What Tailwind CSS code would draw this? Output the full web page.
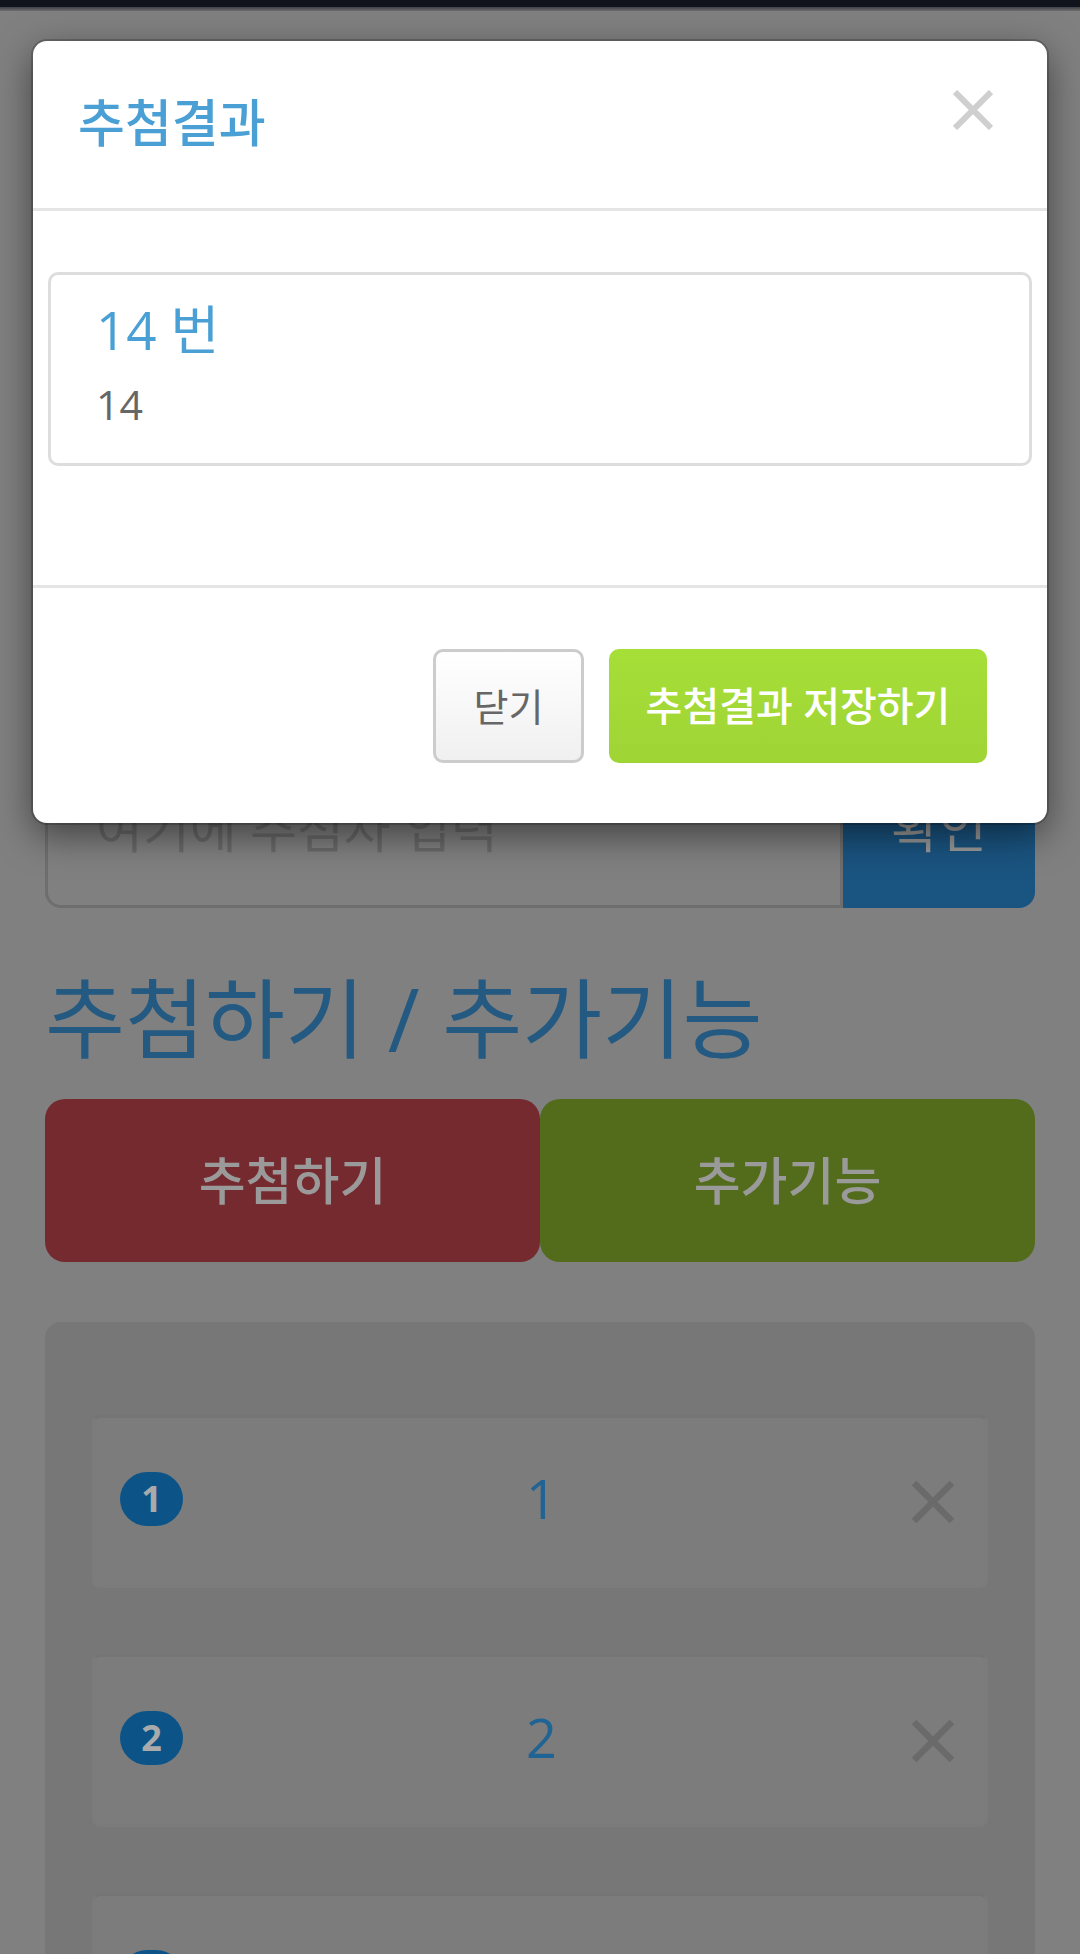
<!DOCTYPE html>
<html lang="ko">
    <head>
        <meta charset="UTF-8">
        <title>추첨결과</title>
        <script src="https://cdn.jsdelivr.net/npm/@tailwindcss/browser@4"></script>
    </head>
    <body class="bg-white font-['Open_Sans','Noto_Sans_CJK_KR',sans-serif]">
        <div class="relative h-[1954px] overflow-hidden bg-[#808080]">
            <!-- top bar -->
            <div class="h-[7px] bg-[#11131c]"></div>
            <div class="h-[4px] bg-linear-to-b from-[#3f3f47] to-[#6e6e6e]"></div>

            <div class="px-[45px] pt-[737px]">
                <!-- input group -->
                <div class="flex h-[160px]">
                    <div class="flex flex-1 items-center rounded-l-[16px] border-[3px] border-[#6e6e6e] pl-[48px] text-[51px] text-[#6a6a6a]">여기에 추첨자 입력</div>
                    <div class="flex w-[192px] items-center justify-center rounded-r-[16px] bg-[#1a5480] text-[52px] text-[#999]">확인</div>
                </div>

                <h1 class="flex h-[191px] items-center pt-[30px] text-[87px] leading-none text-[#245a82]">추첨하기 / 추가기능</h1>

                <!-- action buttons -->
                <div class="flex h-[163px]">
                    <div class="flex flex-1 items-center justify-center rounded-[20px] bg-[#752a2f] text-[51px] font-medium text-[#9a9a9a]">추첨하기</div>
                    <div class="flex flex-1 items-center justify-center rounded-[20px] bg-[#526c1b] text-[51px] font-medium text-[#9a9a9a]">추가기능</div>
                </div>

                <!-- list -->
                <div class="mt-[60px] flex flex-col gap-[66px] rounded-[16px] bg-[#777] px-[47px] pt-[93px] pb-[40px]">
                    <div class="grid h-[173px] grid-cols-[1fr_auto_1fr] items-center rounded-[8px] border-[3px] border-[#7b7b7b] border-t-[#757575] bg-[#7c7c7c] px-[25px]">
                        <span class="mb-[6px] flex h-[54px] w-[63px] items-center justify-center rounded-full bg-[#0c5488] text-[36px] font-bold text-[#aaa]">1</span>
                        <span class="mb-[6px] ml-[3px] text-[54px] text-[#1f6494]">1</span>
                        <svg class="mr-[6px] justify-self-end" width="42" height="42" viewBox="0 0 42 42" stroke="#6a6a6a" stroke-width="6.5"><path d="M2 2 40 40M40 2 2 40" /></svg>
                    </div>
                    <div class="grid h-[173px] grid-cols-[1fr_auto_1fr] items-center rounded-[8px] border-[3px] border-[#7b7b7b] border-t-[#757575] bg-[#7c7c7c] px-[25px]">
                        <span class="mb-[6px] flex h-[54px] w-[63px] items-center justify-center rounded-full bg-[#0c5488] text-[36px] font-bold text-[#aaa]">2</span>
                        <span class="mb-[6px] ml-[3px] text-[54px] text-[#1f6494]">2</span>
                        <svg class="mr-[6px] justify-self-end" width="42" height="42" viewBox="0 0 42 42" stroke="#6a6a6a" stroke-width="6.5"><path d="M2 2 40 40M40 2 2 40" /></svg>
                    </div>
                    <div class="grid h-[173px] grid-cols-[1fr_auto_1fr] items-center rounded-[8px] border-[3px] border-[#7b7b7b] border-t-[#757575] bg-[#7c7c7c] px-[25px]">
                        <span class="mb-[6px] flex h-[54px] w-[63px] items-center justify-center rounded-full bg-[#0c5488] text-[36px] font-bold text-[#aaa]">3</span>
                        <span class="mb-[6px] ml-[3px] text-[54px] text-[#1f6494]">3</span>
                    </div>
                </div>
            </div>

            <!-- result modal -->
            <div class="absolute top-[41px] left-[33px] flex h-[782px] w-[1014px] flex-col rounded-[14px] bg-white shadow-[0_0_0_2px_rgba(0,0,0,0.18),0_12px_37px_rgba(0,0,0,0.5)]">
                <div class="flex h-[170px] justify-between border-b-[3px] border-[#e5e5e5] pr-[54px] pl-[45px]">
                    <h2 class="mt-[51px] text-[51px] font-medium leading-[60px] text-[#4a9fd5]">추첨결과</h2>
                    <svg class="mt-[49px]" width="40" height="40" viewBox="0 0 40 40" stroke="#cfcfcf" stroke-width="6"><path d="M2 2 38 38M38 2 2 38" /></svg>
                </div>
                <div class="flex-1 px-[15px] pt-[61px]">
                    <div class="h-[194px] rounded-[10px] border-[3px] border-[#ddd] pt-[23px] pl-[45px]">
                        <div class="text-[53px] leading-[64px] text-[#4a9fd5]">14 번</div>
                        <div class="mt-[12px] text-[41px] leading-[60px] text-[#666]">14</div>
                    </div>
                </div>
                <div class="flex h-[238px] justify-end gap-[25px] border-t-[3px] border-[#e5e5e5] pt-[61px] pr-[60px]">
                    <button class="flex h-[114px] w-[151px] items-center justify-center rounded-[10px] border-[3px] border-[#ccc] bg-linear-to-b from-white to-[#f0f0f0] text-[38px] text-[#666]">닫기</button>
                    <button class="flex h-[114px] w-[378px] items-center justify-center rounded-[10px] bg-linear-to-b from-[#a6df38] to-[#9fd435] text-[40px] font-medium text-white">추첨결과 저장하기</button>
                </div>
            </div>
        </div>
    </body>
</html>
